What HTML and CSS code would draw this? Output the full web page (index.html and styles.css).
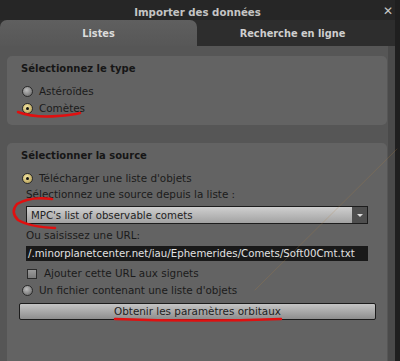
FILE: index.html
```html
<!DOCTYPE html>
<html>
<head>
	<meta charset="UTF-8">
	<title>Importer des données</title>
	<link rel="stylesheet" href="styles.css">
</head>
<body>
	<div class="window">
		<div class="titlebar">
			<span class="title">Importer des données</span>
			<span class="close">&#x2715;</span>
		</div>
		<div class="tabs">
			<div class="tab active">Listes</div>
			<div class="tab">Recherche en ligne</div>
		</div>
		<div class="panel">
			<div class="group g1">
				<div class="gtitle">Sélectionnez le type</div>
				<div class="opt"><span class="radio"></span>Astéroïdes</div>
				<div class="opt"><span class="radio on"></span>Comètes</div>
			</div>
			<div class="group g2">
				<div class="gtitle">Sélectionner la source</div>
				<div class="opt first"><span class="radio on"></span>Télécharger une liste d'objets</div>
				<div class="sub">Sélectionnez une source depuis la liste :</div>
				<div class="combo">
					<span class="ctext">MPC's list of observable comets</span>
					<span class="arrow"></span>
				</div>
				<div class="sub url-label">Ou saisissez une URL:</div>
				<div class="url">/.minorplanetcenter.net/iau/Ephemerides/Comets/Soft00Cmt.txt</div>
				<div class="opt chk"><span class="check"></span>Ajouter cette URL aux signets</div>
				<div class="opt"><span class="radio"></span>Un fichier contenant une liste d'objets</div>
				<div class="button">Obtenir les paramètres orbitaux</div>
			</div>
		</div>
		<div class="edge"></div>
	</div>

	<!-- marques rouges -->
	<svg class="marks" width="400" height="361" viewBox="0 0 400 361">
		<path d="M18 112 Q34 118 58 116 Q72 115 80 113" />
		<path d="M52 199 Q30 196 17 204 Q10 212 18 220 Q30 227 55 228" />
		<path d="M115 319 Q200 322 281 319" />
		<path class="thin" d="M397 149 L255 290" />
	</svg>
</body>
</html>
```

FILE: styles.css
```css
*{
	padding: 0;
	margin: 0;
	box-sizing: border-box;
}
body{
	width: 400px;
	height: 361px;
	overflow: hidden;
	background: #1f1f1f;
	font-family: "DejaVu Sans", Verdana, sans-serif;
	font-size: 10px;
	color: #1b1b1b;
	position: relative;
}
.window{
	width: 395px;
	height: 361px;
	display: flex;
	flex-direction: column;
	position: relative;
	background: #2d2d2d;
}
.titlebar{
	height: 20px;
	background: #262626;
	display: flex;
	align-items: center;
	justify-content: center;
	position: relative;
}
.title{
	font-weight: bold;
	font-size: 10.2px;
	color: #c4c4c4;
	margin-top: 4px;
}
.close{
	position: absolute;
	right: 2px;
	top: 4px;
	font-size: 12px;
	font-weight: bold;
	color: #c8c8c8;
}
.tabs{
	height: 26px;
	display: flex;
	background: #2d2d2d;
	width: 388px;
}
.tab{
	flex: 1;
	display: flex;
	align-items: center;
	justify-content: center;
	font-weight: bold;
	font-size: 9.8px;
	color: #cfcfcf;
}
.tab.active{
	flex: 0 0 197px;
	background: linear-gradient(#5f5f5f, #575757);
	border-radius: 7px 7px 0 0;
	color: #dcdcdc;
}
.panel{
	flex: 1;
	width: 388px;
	background: #565656;
	padding: 10px 1px 0 7px;
	display: flex;
	flex-direction: column;
	gap: 18px;
}
.edge{
	position: absolute;
	left: 388px;
	top: 46px;
	width: 7px;
	bottom: 0;
	background: #4a4a4a;
}
.group{
	background: #636363;
	border-radius: 5px;
	padding: 6px 0 0 14px;
}
.g1{
	height: 69px;
}
.g2{
	flex: 1;
	border-radius: 5px 5px 0 0;
}
.gtitle{
	font-weight: bold;
	font-size: 10px;
	line-height: 14px;
	color: #161616;
	margin-bottom: 7px;
}
.opt{
	display: flex;
	align-items: center;
	height: 17px;
	line-height: 17px;
	font-size: 10.4px;
}
.radio{
	width: 11px;
	height: 11px;
	border-radius: 50%;
	border: 1px solid #2a2a2a;
	background: radial-gradient(circle at 40% 35%, #bdbdbd, #777 75%);
	margin: 0 6px 0 1px;
	display: flex;
	align-items: center;
	justify-content: center;
}
.radio.on{
	background: radial-gradient(circle at 40% 35%, #f4e6a4, #b9a35a 80%);
}
.radio.on::after{
	content: "";
	width: 3px;
	height: 3px;
	border-radius: 50%;
	background: #111;
}
.g2 .first{
	height: 17px;
}
.sub{
	font-size: 10.4px;
	line-height: 15px;
	margin-left: 5px;
}
.combo{
	margin: 4px 0 0 5px;
	width: 342px;
	height: 18px;
	border: 1px solid #1c1c1c;
	background: linear-gradient(#cfcfcf, #a2a2a2);
	display: flex;
	align-items: center;
}
.ctext{
	flex: 1;
	padding-left: 4px;
	font-size: 10.2px;
	color: #222;
}
.arrow{
	width: 15px;
	height: 16px;
	background: #4e4e4e;
	display: flex;
	align-items: center;
	justify-content: center;
}
.arrow::after{
	content: "";
	border-left: 3px solid transparent;
	border-right: 3px solid transparent;
	border-top: 3px solid #ddd;
}
.url-label{
	margin-top: 4px;
}
.url{
	margin: 3px 0 0 5px;
	width: 342px;
	height: 15px;
	background: #191919;
	color: #e2e2e2;
	font-size: 10.2px;
	line-height: 15px;
	padding-left: 2px;
	white-space: nowrap;
	overflow: hidden;
}
.chk{
	margin-top: 4px;
	margin-left: 6px;
}
.check{
	width: 10px;
	height: 10px;
	border: 1px solid #2a2a2a;
	background: linear-gradient(#9a9a9a, #7a7a7a);
	margin-right: 7px;
}
.button{
	margin: 4px 0 0 -2px;
	width: 357px;
	height: 17px;
	border: 1px solid #1c1c1c;
	border-radius: 2px;
	background: linear-gradient(#c4c4c4, #8e8e8e);
	text-align: center;
	line-height: 15px;
	font-size: 10.4px;
	color: #1e1e1e;
}
.marks{
	position: absolute;
	left: 0;
	top: 0;
	pointer-events: none;
}
.marks path{
	fill: none;
	stroke: #e01010;
	stroke-width: 2.5;
	stroke-linecap: round;
}
.marks path.thin{
	stroke: #b08040;
	stroke-width: 1;
	opacity: 0.25;
}
```
